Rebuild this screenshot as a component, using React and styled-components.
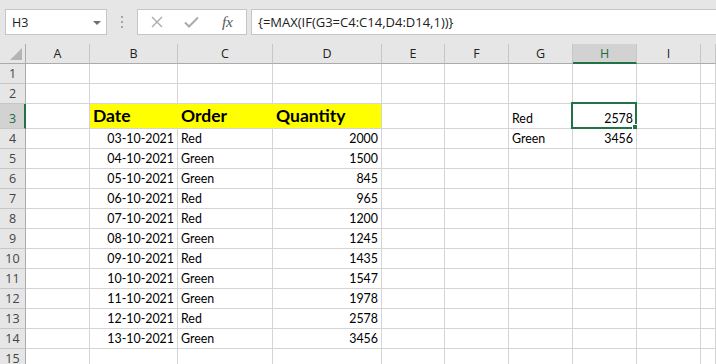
import React from "react";
import styled, { createGlobalStyle } from "styled-components";

const Global = createGlobalStyle`
  html, body { margin: 0; padding: 0; background: #ffffff; }
  body { width: 716px; height: 364px; overflow: hidden; font-family: "Open Sans", "Noto Sans", sans-serif; }
`;

const Page = styled.div`
  width: 716px;
  height: 364px;
  overflow: hidden;
  display: flex;
  flex-direction: column;
  background: #fff;
`;

const Toolbar = styled.div`
  height: 44px;
  flex: none;
  background: #e6e6e6;
  display: flex;
  align-items: flex-start;
  padding-top: 9px;
  box-sizing: border-box;
`;

const NameBox = styled.div`
  margin-left: 5px;
  width: 102px;
  height: 26px;
  box-sizing: border-box;
  background: #fff;
  border: 1px solid #c6c6c6;
  display: flex;
  align-items: center;
  justify-content: space-between;
  padding: 0 5px 0 6px;
  font-family: "Open Sans", "Noto Sans", sans-serif;
  font-size: 12.5px;
  color: #222;
`;

const Caret = styled.span`
  width: 0;
  height: 0;
  border-left: 4px solid transparent;
  border-right: 4px solid transparent;
  border-top: 4px solid #6e6e6e;
  margin-top: 1px;
`;

const Grip = styled.div`
  width: 30px;
  height: 26px;
  display: flex;
  flex-direction: column;
  align-items: center;
  justify-content: center;
  gap: 3px;
`;

const Dot = styled.span`
  width: 2px;
  height: 2px;
  background: #a6a6a6;
`;

const FxButtons = styled.div`
  width: 110px;
  height: 26px;
  box-sizing: border-box;
  background: #fff;
  border: 1px solid #c6c6c6;
  display: flex;
  align-items: center;
  padding-left: 13px;
`;

const IconSlot = styled.span`
  width: ${(p) => p.$w}px;
  display: flex;
  align-items: center;
  justify-content: flex-start;
`;

const FxText = styled.span`
  font-family: "Liberation Serif", "DejaVu Serif", serif;
  font-style: italic;
  font-size: 15.5px;
  color: #595959;
  letter-spacing: -0.3px;
`;

const FormulaInput = styled.div`
  margin-left: 4px;
  flex: 1;
  height: 26px;
  box-sizing: border-box;
  background: #fff;
  border: 1px solid #c6c6c6;
  border-right: none;
  display: flex;
  align-items: center;
  padding-left: 6px;
  font-family: "Open Sans", "Noto Sans", sans-serif;
  font-size: 13px;
  color: #222;
`;

const COLS = [26, 64, 88, 95, 109, 63, 64, 64, 64, 64];

const Sheet = styled.div`
  display: grid;
  grid-template-columns: ${COLS.map((c) => c + "px").join(" ")} 1fr;
  grid-auto-rows: 20px;
  grid-template-rows: 20px 20px 20px 25px;
  flex: none;
`;

const ColHead = styled.div`
  box-sizing: border-box;
  background: ${(p) => (p.$active ? "#d2d2d2" : "#e6e6e6")};
  border-right: 1px solid #c6c6c6;
  border-bottom: ${(p) => (p.$active ? "2px solid #217346" : "1px solid #ababab")};
  display: flex;
  align-items: center;
  justify-content: center;
  font-family: "Open Sans", "Noto Sans", sans-serif;
  font-size: 12.5px;
  color: ${(p) => (p.$active ? "#1e6b40" : "#222")};
  padding-top: ${(p) => (p.$active ? "1px" : "0")};
`;

const Corner = styled.div`
  box-sizing: border-box;
  background: #e6e6e6;
  border-right: 1px solid #ababab;
  border-bottom: 1px solid #ababab;
  display: flex;
  align-items: flex-end;
  justify-content: flex-end;
  padding: 0 3px 3px 0;
`;

const RowHead = styled.div`
  box-sizing: border-box;
  background: ${(p) => (p.$active ? "#d2d2d2" : "#e6e6e6")};
  border-right: ${(p) => (p.$active ? "2px solid #217346" : "1px solid #ababab")};
  border-bottom: 1px solid #c6c6c6;
  display: flex;
  align-items: flex-end;
  justify-content: center;
  padding-bottom: 1px;
  padding-left: ${(p) => (p.$active ? "1px" : "0")};
  font-family: "Open Sans", "Noto Sans", sans-serif;
  font-size: 12.5px;
  line-height: 17px;
  color: ${(p) => (p.$active ? "#1e6b40" : "#444")};
`;

const Cell = styled.div`
  position: relative;
  box-sizing: border-box;
  background: ${(p) => (p.$fill ? "#ffff00" : "#fff")};
  border-right: 1px solid ${(p) => (p.$fillNext ? "#ffff00" : "#d4d4d4")};
  border-bottom: 1px solid #d4d4d4;
  display: flex;
  align-items: flex-end;
  justify-content: ${(p) => (p.$right ? "flex-end" : "flex-start")};
  padding: 0 3px 1px 3px;
  font-family: Lato, "Open Sans", sans-serif;
  font-size: ${(p) => (p.$bold ? "17.5px" : "12.4px")};
  font-weight: ${(p) => (p.$bold ? 700 : 400)};
  line-height: ${(p) => (p.$bold ? "22px" : "17px")};
  color: #000;
  white-space: nowrap;
`;

const Selection = styled.div`
  position: absolute;
  left: -2px;
  top: -2px;
  right: -1px;
  bottom: -1px;
  border: 2px solid #217346;
  pointer-events: none;
`;

const Handle = styled.div`
  position: absolute;
  right: -4px;
  bottom: -4px;
  width: 5px;
  height: 5px;
  background: #217346;
  border: 1px solid #fff;
`;

const LETTERS = ["A", "B", "C", "D", "E", "F", "G", "H", "I", ""];

const data = [
  ["03-10-2021", "Red", 2000],
  ["04-10-2021", "Green", 1500],
  ["05-10-2021", "Green", 845],
  ["06-10-2021", "Red", 965],
  ["07-10-2021", "Red", 1200],
  ["08-10-2021", "Green", 1245],
  ["09-10-2021", "Red", 1435],
  ["10-10-2021", "Green", 1547],
  ["11-10-2021", "Green", 1978],
  ["12-10-2021", "Red", 2578],
  ["13-10-2021", "Green", 3456],
];

function buildRows() {
  const rows = [];
  for (let r = 1; r <= 15; r++) {
    const cells = Array(10).fill(null).map(() => ({}));
    if (r === 3) {
      cells[1] = { text: "Date", bold: true, fill: true, fillNext: true };
      cells[2] = { text: "Order", bold: true, fill: true, fillNext: true };
      cells[3] = { text: "Quantity", bold: true, fill: true };
      cells[6] = { text: "Red" };
      cells[7] = { text: "2578", right: true, selected: true };
    }
    if (r === 4) {
      cells[6] = { text: "Green" };
      cells[7] = { text: "3456", right: true };
    }
    if (r >= 4 && r <= 14) {
      const d = data[r - 4];
      cells[1] = { text: d[0], right: true };
      cells[2] = { text: d[1] };
      cells[3] = { text: String(d[2]), right: true };
    }
    rows.push({ r, cells });
  }
  return rows;
}

const XIcon = () => (
  <svg width="12" height="12" viewBox="0 0 12 12">
    <path d="M1 1 L11 11 M11 1 L1 11" stroke="#ababab" strokeWidth="1.4" fill="none" />
  </svg>
);

const CheckIcon = () => (
  <svg width="15" height="12" viewBox="0 0 15 12">
    <path d="M1 6.5 L5 10.5 L14 1.5" stroke="#ababab" strokeWidth="2" fill="none" />
  </svg>
);

const CornerTri = () => (
  <svg width="12" height="12" viewBox="0 0 12 12">
    <path d="M12 0 L12 12 L0 12 Z" fill="#b4b4b4" />
  </svg>
);

export default function App() {
  const rows = buildRows();
  return (
    <Page>
      <Global />
      <Toolbar>
        <NameBox>
          <span>H3</span>
          <Caret />
        </NameBox>
        <Grip>
          <Dot />
          <Dot />
          <Dot />
        </Grip>
        <FxButtons>
          <IconSlot $w={33}><XIcon /></IconSlot>
          <IconSlot $w={38}><CheckIcon /></IconSlot>
          <IconSlot $w={22}><FxText>fx</FxText></IconSlot>
        </FxButtons>
        <FormulaInput>{"{=MAX(IF(G3=C4:C14,D4:D14,1))}"}</FormulaInput>
      </Toolbar>
      <Sheet>
        <Corner><CornerTri /></Corner>
        {LETTERS.map((l, i) => (
          <ColHead key={i} $active={l === "H"}>{l}</ColHead>
        ))}
        {rows.map(({ r, cells }) => (
          <React.Fragment key={r}>
            <RowHead $active={r === 3}>{r}</RowHead>
            {cells.map((c, i) => (
              <Cell
                key={i}
                $right={c.right}
                $bold={c.bold}
                $fill={c.fill}
                $fillNext={c.fillNext}
              >
                {c.text}
                {c.selected && (
                  <Selection>
                    <Handle />
                  </Selection>
                )}
              </Cell>
            ))}
          </React.Fragment>
        ))}
      </Sheet>
    </Page>
  );
}
